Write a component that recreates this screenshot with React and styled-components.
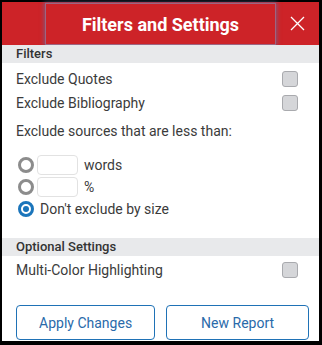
import React from 'react';
import styled, { createGlobalStyle } from 'styled-components';

const GlobalStyle = createGlobalStyle`
  html, body {
    margin: 0;
    padding: 0;
    background: #000;
  }
  * {
    box-sizing: border-box;
  }
`;

const Panel = styled.div`
  width: 322px;
  height: 345px;
  background: #fff;
  border-style: solid;
  border-color: #000;
  border-width: 2px 3px 4px 2px;
  font-family: Roboto, "Liberation Sans", sans-serif;
  color: #3b3b3b;
  display: flex;
  flex-direction: column;
`;

const Header = styled.div`
  height: 43px;
  background: #cd2328;
  display: flex;
`;

const Spacer = styled.div`
  width: 43px;
`;

const Title = styled.div`
  flex: 1;
  margin: 1px 0 0;
  display: flex;
  align-items: center;
  justify-content: center;
  color: #fff;
  font-size: 18px;
  font-weight: 700;
  border: 1px solid rgba(125, 145, 190, 0.6);
  box-shadow: 0 0 4px 1px rgba(90, 115, 170, 0.6);
`;

const Close = styled.button`
  width: 43px;
  border: none;
  background: transparent;
  padding: 0;
  display: flex;
  align-items: center;
  justify-content: center;
  cursor: pointer;
`;

const SectionBar = styled.div`
  height: 18px;
  background: #e8e9eb;
  padding-left: 14px;
  font-size: 13px;
  font-weight: 500;
  line-height: 18px;
  color: #333;
`;

const Body = styled.div`
  padding: ${p => p.$pad || '0 21px 0 14px'};
  display: flex;
  flex-direction: column;
`;

const CheckRow = styled.label`
  height: 24px;
  display: flex;
  align-items: center;
  justify-content: space-between;
  font-size: 14px;
`;

const Box = styled.span`
  width: 16px;
  height: 16px;
  border-radius: 3px;
  background: #d5d6d9;
  border: 1px solid #a9aaae;
`;

const Prompt = styled.div`
  font-size: 14px;
  margin: 8px 0 15px;
`;

const RadioRow = styled.div`
  height: 22px;
  display: flex;
  align-items: center;
  font-size: 14px;
`;

const Radio = styled.span`
  width: 16px;
  height: 16px;
  border-radius: 50%;
  border: 3px solid ${p => (p.$on ? '#1b75bb' : '#8c8c8c')};
  display: flex;
  align-items: center;
  justify-content: center;
  margin-left: 2px;
  margin-right: ${p => (p.$on ? '6px' : '3px')};
  &::after {
    content: '';
    width: 6px;
    height: 6px;
    border-radius: 50%;
    background: ${p => (p.$on ? '#1b75bb' : 'transparent')};
  }
`;

const SizeInput = styled.span`
  width: 41px;
  height: 20px;
  border: 1px solid #e2e2e2;
  border-radius: 4px;
  margin-right: 6px;
`;

const Buttons = styled.div`
  margin-top: auto;
  padding: 0 10px 1px 14px;
  display: flex;
  gap: 11px;
`;

const Btn = styled.button`
  flex: ${p => p.$grow};
  height: 35px;
  border: 1px solid #1f72b6;
  border-radius: 4px;
  background: #fff;
  color: #2a6aaa;
  font-family: Roboto, "Liberation Sans", sans-serif;
  font-size: 14px;
`;

export default function App() {
  return (
    <>
      <GlobalStyle />
      <Panel>
        <Header>
          <Spacer />
          <Title>Filters and Settings</Title>
          <Close aria-label="Close">
            <svg width="15" height="15" viewBox="0 0 15 15">
              <path d="M1 1L14 14M14 1L1 14" stroke="#fff" strokeWidth="1.3" />
            </svg>
          </Close>
        </Header>
        <SectionBar>Filters</SectionBar>
        <Body $pad="4px 21px 0 14px">
          <CheckRow>Exclude Quotes<Box /></CheckRow>
          <CheckRow>Exclude Bibliography<Box /></CheckRow>
          <Prompt>Exclude sources that are less than:</Prompt>
          <RadioRow><Radio /><SizeInput />words</RadioRow>
          <RadioRow><Radio /><SizeInput />%</RadioRow>
          <RadioRow><Radio $on />Don't exclude by size</RadioRow>
        </Body>
        <Body $pad="18px 0 0 0">
          <SectionBar>Optional Settings</SectionBar>
        </Body>
        <Body $pad="2px 21px 0 14px">
          <CheckRow>Multi-Color Highlighting<Box /></CheckRow>
        </Body>
        <Buttons>
          <Btn $grow="139">Apply Changes</Btn>
          <Btn $grow="143">New Report</Btn>
        </Buttons>
      </Panel>
    </>
  );
}
